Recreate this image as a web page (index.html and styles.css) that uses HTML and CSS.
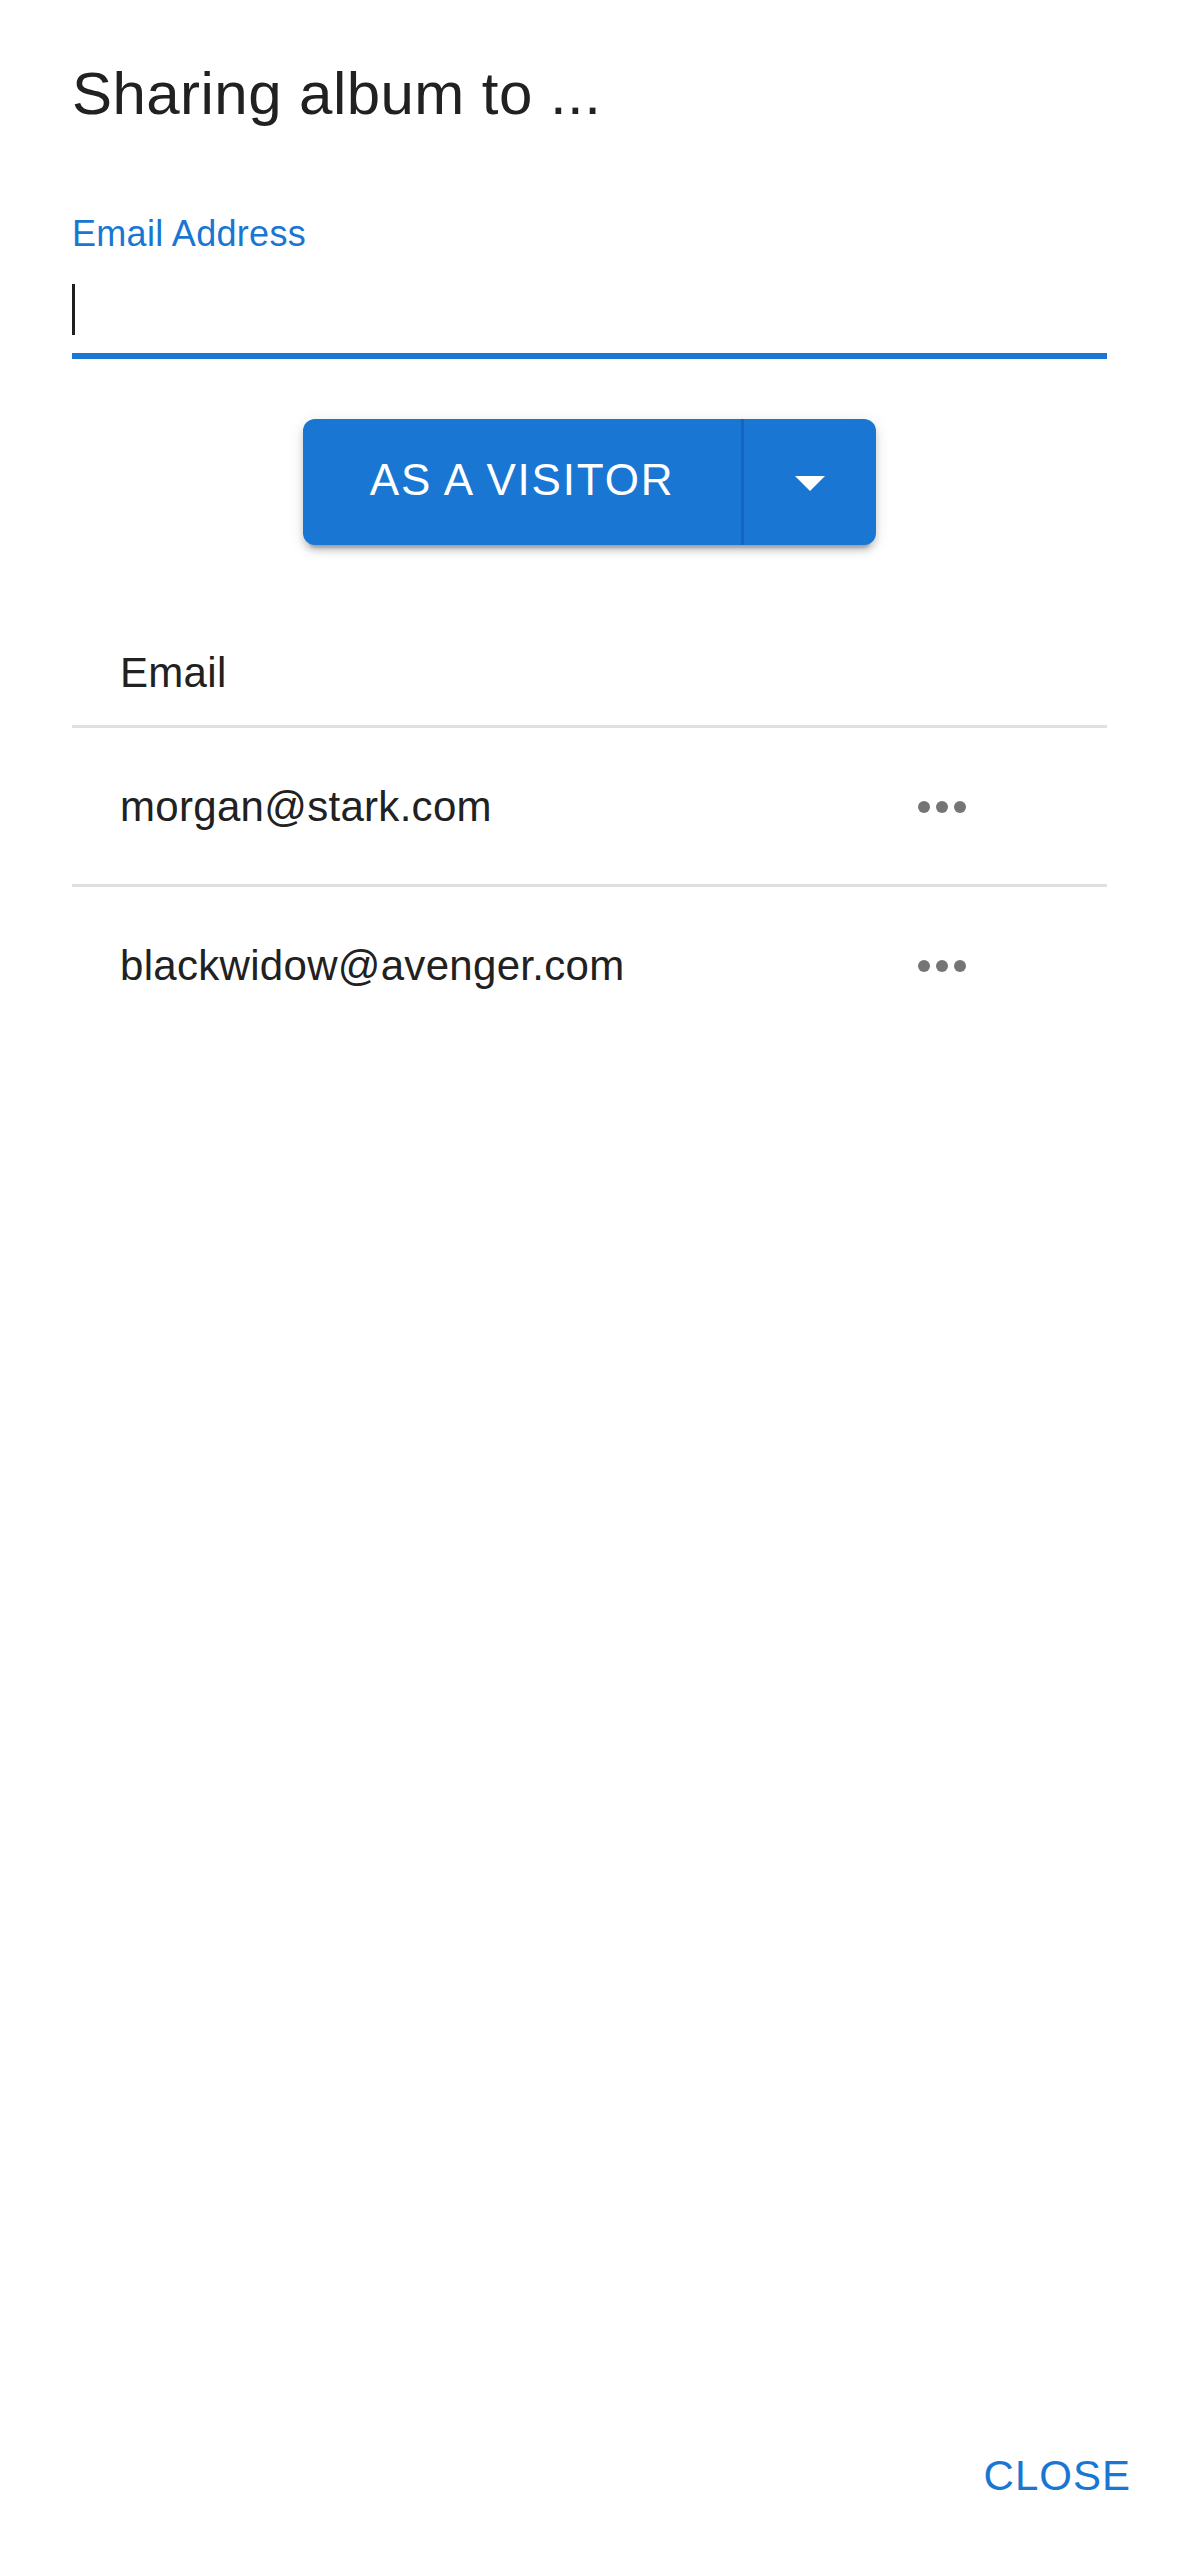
FILE: index.html
```html
<!DOCTYPE html>
<html lang="en">
<head>
<meta charset="utf-8">
<title>Sharing album</title>
<link rel="stylesheet" href="styles.css">
</head>
<body>
<div class="page">
  <main class="dialog">
    <h1 class="title">Sharing album to ...</h1>

    <div class="field">
      <label class="field-label">Email Address</label>
      <div class="field-input"><span class="caret"></span></div>
    </div>

    <div class="split-wrap">
      <div class="split-btn">
        <button class="split-main" type="button">AS A VISITOR</button>
        <span class="split-divider"></span>
        <button class="split-drop" type="button" aria-label="More roles">
          <svg class="drop-icon" width="30" height="15" viewBox="0 0 10 5"><polygon points="0,0 10,0 5,5" fill="#ffffff"/></svg>
        </button>
      </div>
    </div>

    <div class="table">
      <div class="table-head">Email</div>
      <div class="table-row">
        <span class="cell-email">morgan@stark.com</span>
        <span class="more"><i class="dot"></i><i class="dot"></i><i class="dot"></i></span>
      </div>
      <div class="table-row last">
        <span class="cell-email">blackwidow@avenger.com</span>
        <span class="more"><i class="dot"></i><i class="dot"></i><i class="dot"></i></span>
      </div>
    </div>
  </main>

  <footer class="actions">
    <button class="text-btn" type="button">CLOSE</button>
  </footer>
</div>
</body>
</html>
```

FILE: styles.css
```css
* {
  box-sizing: border-box;
}

html, body {
  margin: 0;
  padding: 0;
  background: #ffffff;
}

body {
  font-family: "Liberation Sans", Arial, sans-serif;
  color: #212121;
}

.page {
  min-height: 100vh;
  display: flex;
  flex-direction: column;
}

.dialog {
  padding: 58px 72px 0 72px;
}

.title {
  margin: 0;
  font-size: 60px;
  font-weight: 400;
  line-height: 72px;
  letter-spacing: 0.45px;
  color: #212121;
}

.field {
  margin-top: 80px;
}

.field-label {
  display: block;
  font-size: 36px;
  line-height: 48px;
  color: #1976d2;
  letter-spacing: 0.3px;
}

.field-input {
  padding-top: 26px;
  padding-bottom: 18px;
  border-bottom: 6px solid #1976d2;
  display: flex;
}

.caret {
  display: block;
  width: 3px;
  height: 51px;
  background: #1f1f1f;
}

.split-wrap {
  margin-top: 60px;
  display: flex;
  justify-content: center;
}

.split-btn {
  display: flex;
  height: 126px;
  border-radius: 12px;
  background: #1976d2;
  box-shadow: 0 9px 3px -6px rgba(0, 0, 0, 0.2), 0 6px 6px 0 rgba(0, 0, 0, 0.14), 0 3px 15px 0 rgba(0, 0, 0, 0.12);
  overflow: hidden;
}

.split-main {
  width: 438px;
  border: 0;
  background: transparent;
  color: #ffffff;
  font-family: "Liberation Sans", Arial, sans-serif;
  font-size: 44px;
  font-weight: 400;
  letter-spacing: 1.8px;
  padding: 0 0 4px 0;
  margin: 0;
}

.split-divider {
  width: 3px;
  background: #1565c0;
}

.split-drop {
  width: 132px;
  border: 0;
  background: transparent;
  padding: 0;
  margin: 0;
  display: flex;
  align-items: center;
  justify-content: center;
}

.drop-icon {
  display: block;
  margin-top: 2px;
}

.table {
  margin-top: 100px;
}

.table-head {
  padding: 0 48px 24px 48px;
  font-size: 42px;
  line-height: 56px;
  letter-spacing: 0.3px;
  border-bottom: 3px solid #e0e0e0;
}

.table-row {
  height: 159px;
  display: flex;
  align-items: center;
  justify-content: space-between;
  padding: 2px 129px 0 48px;
  border-bottom: 3px solid #e0e0e0;
}

.table-row.last {
  border-bottom: 0;
  height: 156px;
}

.cell-email {
  font-size: 42px;
  letter-spacing: 0.3px;
  color: #212121;
}

.more {
  width: 72px;
  display: flex;
  justify-content: center;
  gap: 6px;
}

.dot {
  display: block;
  width: 12px;
  height: 12px;
  border-radius: 50%;
  background: #757575;
}

.actions {
  margin-top: auto;
  display: flex;
  justify-content: flex-end;
  padding: 0 24px 23px 24px;
}

.text-btn {
  height: 108px;
  line-height: 108px;
  padding: 0 24px;
  border: 0;
  background: transparent;
  color: #1976d2;
  font-family: "Liberation Sans", Arial, sans-serif;
  font-size: 42px;
  font-weight: 400;
  letter-spacing: 1px;
}
```
